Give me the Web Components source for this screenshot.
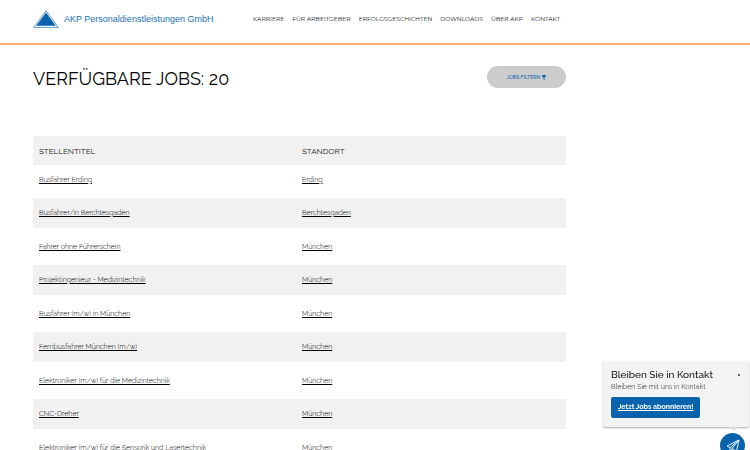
<!DOCTYPE html>
<html lang="de">
<head>
<meta charset="utf-8">
<title>AKP Personaldienstleistungen GmbH – Jobs</title>
<style>
body { margin: 0; background: #fff; color: #222; font-family: Raleway, Lato, "Open Sans", sans-serif; font-size: 7px; line-height: 12px; }
main { padding: 0 184px 0 33px; }
</style>
</head>
<body>
<site-header>
  <nav-link href="#karriere">KARRIERE</nav-link>
  <nav-link href="#arbeitgeber">FÜR ARBEITGEBER</nav-link>
  <nav-link href="#erfolg">ERFOLGSGESCHICHTEN</nav-link>
  <nav-link href="#downloads">DOWNLOADS</nav-link>
  <nav-link href="#akp">ÜBER AKP</nav-link>
  <nav-link href="#kontakt">KONTAKT</nav-link>
</site-header>
<main>
  <page-title>VERFÜGBARE JOBS: 20</page-title>
  <job-table></job-table>
</main>
<contact-widget>
  <span slot="title">Bleiben Sie in Kontakt</span>
  <span slot="text">Bleiben Sie mit uns in Kontakt</span>
  <span slot="action">Jetzt Jobs abonnieren!</span>
</contact-widget>

<script>
class ShadowElement extends HTMLElement {
  constructor() {
    super();
    this.attachShadow({ mode: "open" }).innerHTML = this.template();
  }
}

customElements.define("site-header", class extends ShadowElement {
  template() {
    return `<style>
      :host { display: block; border-bottom: 2px solid #fbab6e; }
      header { display: flex; align-items: center; height: 43px; padding: 0 33px; box-sizing: border-box; padding-bottom: 5px; }
      .logo { display: flex; align-items: center; gap: 5px; width: 220px; flex: none; color: #1c6fb2; text-decoration: none; font: 9px/14px "Liberation Sans", Arial, sans-serif; white-space: nowrap; }
      svg { width: 26px; height: 18px; flex: none; }
      nav { display: flex; gap: 8px; }
    </style>
    <header>
      <a class="logo" href="#start">
        <svg viewBox="0 0 26 18" aria-hidden="true">
          <path d="M13 .8 25.2 17.4H.8Z" fill="#fff" stroke="#4a8fc4" stroke-width=".9"/>
          <path d="M13 2.6 22.8 15.8H3.2Z" fill="#0863ac"/>
        </svg>
        <span>AKP Personaldienstleistungen GmbH</span>
      </a>
      <nav aria-label="Hauptmenü"><slot></slot></nav>
    </header>`;
  }
});

customElements.define("nav-link", class extends ShadowElement {
  template() {
    return `<style>
      :host { display: block; white-space: nowrap; }
      a { color: #111; text-decoration: none; font-family: Montserrat, Raleway, sans-serif; font-size: 6px; font-weight: 400; }
    </style><a href="${this.getAttribute("href")}"><slot></slot></a>`;
  }
});

customElements.define("page-title", class extends ShadowElement {
  template() {
    return `<style>
      :host { display: flex; justify-content: space-between; align-items: flex-start; padding: 21px 0 44px; }
      h1 { margin: 0; color: #000; font-size: 18px; line-height: 26px; font-weight: 400; white-space: nowrap; }
      button { display: flex; align-items: center; justify-content: center; gap: 2px; width: 79px; height: 22px; padding: 0; border: 0; border-radius: 11px; background: #ccc; color: #0863ac; font: inherit; font-size: 5px; font-weight: 500; white-space: nowrap; }
      svg { width: 4px; height: 5px; }
    </style>
    <h1><slot></slot></h1>
    <button type="button">JOBS FILTERN <svg viewBox="0 0 4 5" aria-hidden="true"><path d="M0 0h4v1L2.6 2.6V5L1.4 4V2.6L0 1Z" fill="#0863ac"/></svg></button>`;
  }
});

const jobs = [
  ["Busfahrer Erding", "Erding"],
  ["Busfahrer/in Berchtesgaden", "Berchtesgaden"],
  ["Fahrer ohne Führerschein", "München"],
  ["Projektingenieur - Medizintechnik", "München"],
  ["Busfahrer (m/w) in München", "München"],
  ["Fernbusfahrer München (m/w)", "München"],
  ["Elektroniker (m/w) für die Medizintechnik", "München"],
  ["CNC-Dreher", "München"],
  ["Elektroniker (m/w) für die Sensorik und Lasertechnik", "München"]
];

customElements.define("job-table", class extends ShadowElement {
  template() {
    const rows = jobs.map(job => `<tr>${job.map(text => `<td><a href="#job">${text}</a></td>`).join("")}</tr>`).join("");
    return `<style>
      :host { display: block; }
      table { width: 100%; border-collapse: collapse; table-layout: fixed; }
      th, td { height: 37px; padding: 0 6px; text-align: left; font-weight: 300; }
      th { height: 29px; background: #f1f1f1; font-size: 8px; font-weight: 400; }
      th:first-child { width: 251px; }
      tbody tr:nth-child(even) td { height: 30px; background: #f1f1f1; }
      tbody tr:first-child td { height: 30px; padding-bottom: 3px; }
      a { color: #000; text-decoration: underline; }
    </style>
    <table>
      <thead><tr><th scope="col">STELLENTITEL</th><th scope="col">STANDORT</th></tr></thead>
      <tbody>${rows}</tbody>
    </table>`;
  }
});

customElements.define("contact-widget", class extends ShadowElement {
  template() {
    return `<style>
      :host { position: fixed; right: 1px; top: 361px; width: 146px; display: flex; flex-direction: column; align-items: flex-end; }
      section { position: relative; box-sizing: border-box; width: 100%; padding: 7px 8px 9px; background: #f3f3f3; border-radius: 2px; box-shadow: 0 1px 2px #0005; }
      section::after { content: ""; position: absolute; right: 11px; bottom: -4px; border: solid transparent; border-width: 4px 4px 0; border-top-color: #ddd; }
      .top { display: flex; justify-content: space-between; align-items: center; }
      h2 { margin: 0; font-size: 10px; line-height: 13px; font-weight: 500; color: #111; white-space: nowrap; }
      .close { border: 0; padding: 0; width: 4px; background: none; color: #333; font-size: 7px; line-height: 8px; }
      p { margin: 0 0 4px; color: #222; font-weight: 300; }
      .action { display: flex; width: fit-content; padding: 4px 7px 5px; border-radius: 2px; background: #0863ac; color: #fff; font-weight: 700; line-height: 12px; white-space: nowrap; text-decoration: underline; }
      .send { display: grid; place-items: center; width: 25px; height: 25px; margin: 6px 4px 0 0; padding: 0; border: 0; border-radius: 50%; background: #0863ac; }
      svg { width: 14px; height: 14px; }
    </style>
    <section>
      <div class="top"><h2><slot name="title"></slot></h2><button class="close" type="button" aria-label="Schließen">•</button></div>
      <p><slot name="text"></slot></p>
      <a class="action" href="#abo"><slot name="action"></slot></a>
    </section>
    <button class="send" type="button" aria-label="Nachricht senden">
      <svg viewBox="0 0 14 14" fill="none" stroke="#fff" stroke-width=".9" stroke-linejoin="round" aria-hidden="true"><path d="M13 1 1 7l3 1.7L13 1 5.9 9.5 10.5 12ZM4 8.7V13l2-3.2"/></svg>
    </button>`;
  }
});
</script>
</body>
</html>
